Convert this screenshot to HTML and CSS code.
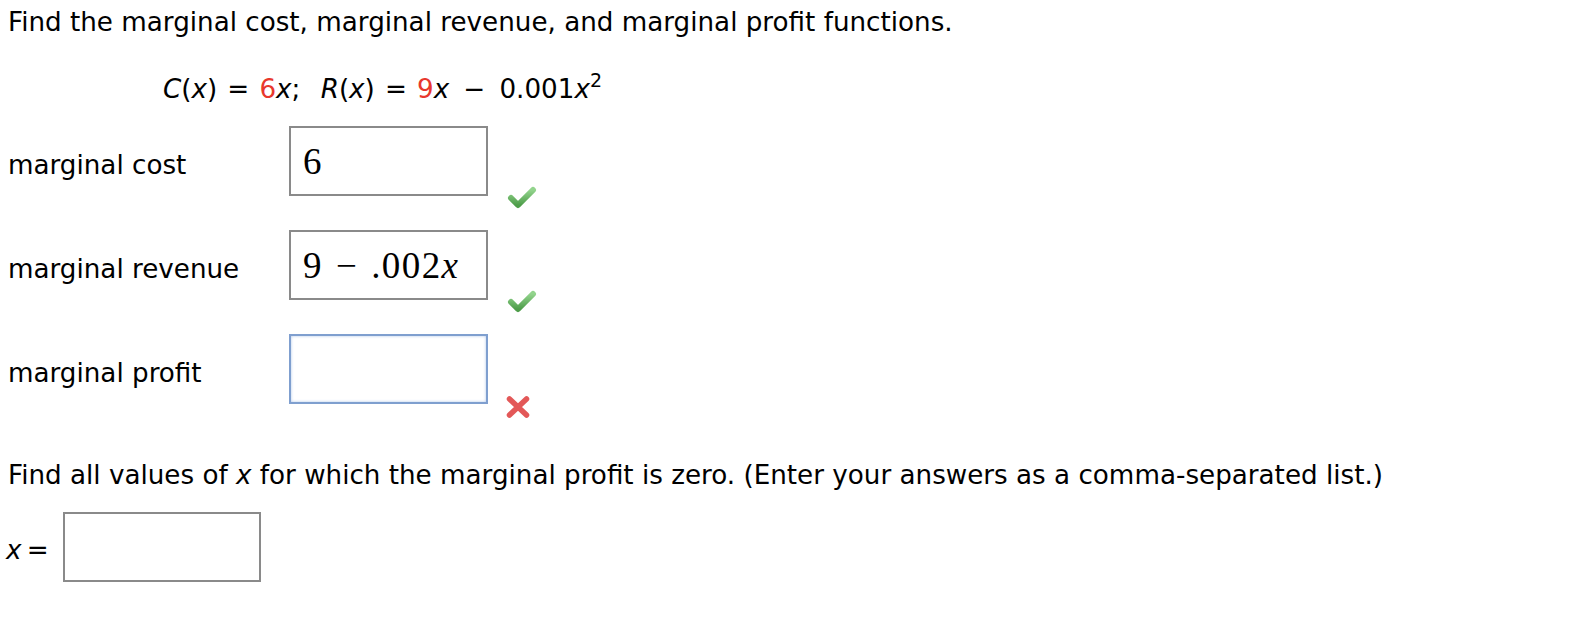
FILE: index.html
```html
<!DOCTYPE html>
<html>
<head>
<meta charset="utf-8">
<link rel="stylesheet" href="styles.css">
</head>
<body>
<div class="page">
  <p class="intro">Find the marginal cost, marginal revenue, and marginal profit functions.</p>
  <p class="formula"><i>C</i>(<i>x</i>) = <span class="red">6</span><i>x</i>;&nbsp; <i>R</i>(<i>x</i>) = <span class="red">9</span><i>x</i> <span class="op">−</span> 0.001<i>x</i><sup>2</sup></p>

  <div class="row">
    <div class="label">marginal cost</div>
    <div class="box"><span class="math">6</span></div>
    <svg class="icon check" viewBox="0 0 30 24" width="30" height="24">
      <defs>
        <linearGradient id="g1" x1="0" y1="0" x2="0" y2="1">
          <stop offset="0" stop-color="#93d48d"/>
          <stop offset="1" stop-color="#4e9d4a"/>
        </linearGradient>
      </defs>
      <path d="M4 13 L11 20 L26 5" fill="none" stroke="url(#g1)" stroke-width="6" stroke-linecap="round" stroke-linejoin="round"/>
    </svg>
  </div>

  <div class="row">
    <div class="label">marginal revenue</div>
    <div class="box"><span class="math">9<span class="minus">−</span>.002<i>x</i></span></div>
    <svg class="icon check" viewBox="0 0 30 24" width="30" height="24">
      <defs>
        <linearGradient id="g2" x1="0" y1="0" x2="0" y2="1">
          <stop offset="0" stop-color="#93d48d"/>
          <stop offset="1" stop-color="#4e9d4a"/>
        </linearGradient>
      </defs>
      <path d="M4 13 L11 20 L26 5" fill="none" stroke="url(#g2)" stroke-width="6" stroke-linecap="round" stroke-linejoin="round"/>
    </svg>
  </div>

  <div class="row">
    <div class="label">marginal profit</div>
    <div class="box focus"></div>
    <svg class="icon cross" viewBox="0 0 26 24" width="26" height="24">
      <path d="M4.5 4 L21.5 20 M21.5 4 L4.5 20" fill="none" stroke="#e35858" stroke-width="5.5" stroke-linecap="round"/>
    </svg>
  </div>

  <p class="question">Find all values of <i>x</i> for which the marginal profit is zero. (Enter your answers as a comma-separated list.)</p>

  <div class="answer">
    <span class="xeq"><i>x</i> =</span>
    <div class="box small"></div>
  </div>
</div>
</body>
</html>
```

FILE: styles.css
```css
html, body {
  margin: 0;
  padding: 0;
  background: #ffffff;
}

body {
  font-family: "DejaVu Sans", Verdana, sans-serif;
  font-size: 26.2px;
  color: #000;
}

.page {
  padding: 7px 0 0 8px;
}

p {
  margin: 0;
  line-height: 30px;
}

.intro {
  margin-bottom: 37px;
}

.formula {
  margin-left: 155px;
  margin-bottom: 22px;
  word-spacing: 1.8px;
}

.red {
  color: #e8382d;
}

.op {
  margin: 0 4px;
}

sup {
  font-size: 19px;
  line-height: 0;
  vertical-align: 11px;
}

.row {
  display: flex;
  align-items: center;
  margin-bottom: 34px;
}

.label {
  width: 281px;
  flex: none;
  padding-top: 7px;
}

.box {
  box-sizing: border-box;
  width: 199px;
  height: 70px;
  border: 2px solid #8a8a8a;
  display: flex;
  align-items: center;
  padding-left: 12px;
  flex: none;
}

.box.focus {
  border-color: #7f9fcf;
  box-shadow: inset 0 0 3px rgba(120, 160, 220, 0.6);
}

.math {
  font-family: "Liberation Serif", "Times New Roman", serif;
  font-size: 37px;
  letter-spacing: 1.4px;
}

.minus {
  margin: 0 13px;
}

.icon {
  flex: none;
  align-self: flex-end;
}

.check {
  margin-left: 19px;
  margin-bottom: -13px;
}

.cross {
  margin-left: 17px;
  margin-bottom: -15px;
  filter: blur(0.4px);
}

.question {
  margin-top: 56px;
  margin-bottom: 22px;
}

.answer {
  display: flex;
  align-items: center;
}

.xeq {
  width: 55px;
  flex: none;
  padding-top: 6px;
  margin-left: -2px;
  margin-right: 2px;
  word-spacing: -3px;
}

.box.small {
  width: 198px;
}
```
